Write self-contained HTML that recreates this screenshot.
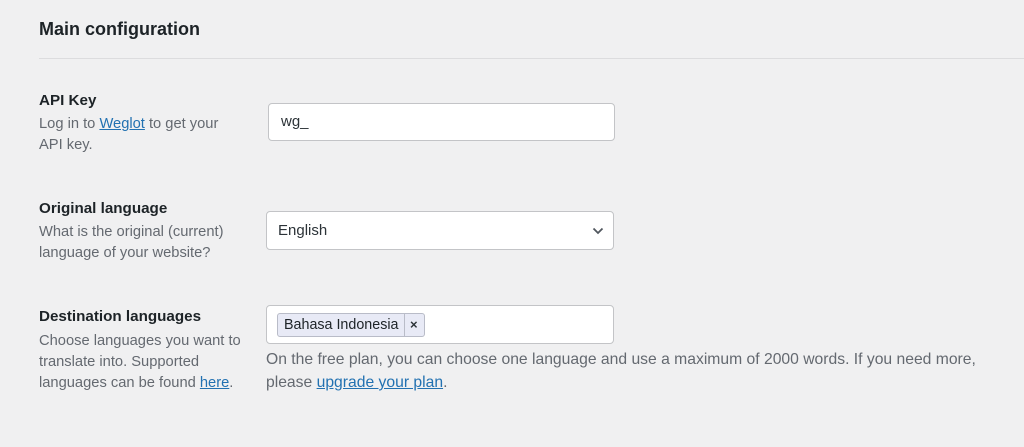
<!DOCTYPE html>
<html><head><style>
body{margin:0;width:1024px;height:447px;background:#f0f0f1;font-family:"Liberation Sans",sans-serif;color:#1d2327;position:relative;overflow:hidden}
.a{position:absolute;white-space:nowrap}
h1{position:absolute;left:39px;top:19px;margin:0;font-size:18px;font-weight:bold;color:#1d2327}
.hr{position:absolute;left:39px;right:0;top:58px;height:1px;background:#dcdcde}
.lbl{font-size:15.2px;font-weight:bold;color:#1d2327}
.d{font-size:14.7px;color:#646970;line-height:21px}
a{color:#2271b1;text-decoration:underline}
.box{position:absolute;background:#fff;border:1px solid #8c8f94;border-radius:4px;box-sizing:border-box;font-size:15px;color:#2c3338}
</style></head><body>
<h1>Main configuration</h1>
<div class="hr"></div>

<div class="a lbl" style="left:39px;top:92px">API Key</div>
<div class="a d" style="left:39px;top:114px">Log in to <a>Weglot</a> to get your<br>API key.</div>
<div class="box" style="left:268px;top:103px;width:347px;height:38px;border-color:#c3c4c7"><span class="a" style="left:12px;top:9px">wg_</span></div>

<div class="a lbl" style="left:39px;top:200px">Original language</div>
<div class="a d" style="left:39px;top:222px">What is the original (current)<br>language of your website?</div>
<div class="box" style="left:266px;top:211px;width:348px;height:39px;border-color:#c3c4c7"><span class="a" style="left:11px;top:10px">English</span>
<svg class="a" style="left:325px;top:15px" width="12" height="8" viewBox="0 0 12 8"><path d="M1.5 1.5L6 6 10.5 1.5" fill="none" stroke="#50575e" stroke-width="1.8"/></svg></div>

<div class="a lbl" style="left:39px;top:308px">Destination languages</div>
<div class="a d" style="left:39px;top:331px">Choose languages you want to<br>translate into. Supported<br>languages can be found <a>here</a>.</div>
<div class="box" style="left:266px;top:305px;width:348px;height:39px;border-color:#c3c4c7">
<div class="a" style="left:10px;top:7px;width:148px;height:24px;background:#e8eaf6;border:1px solid #b9bcc8;border-radius:3px;box-sizing:border-box">
<span class="a" style="left:6px;top:3px;font-size:14.3px;color:#1d2327">Bahasa Indonesia</span>
<span class="a" style="left:126px;top:0;width:1px;height:22px;background:#b9bcc8"></span>
<span class="a" style="left:132px;top:3px;font-size:13px;font-weight:bold">×</span></div></div>
<div class="a d" style="left:266px;top:348px;font-size:15.7px;line-height:23px">On the free plan, you can choose one language and use a maximum of 2000 words. If you need more,<br>please <a>upgrade your plan</a>.</div>
</body></html>
